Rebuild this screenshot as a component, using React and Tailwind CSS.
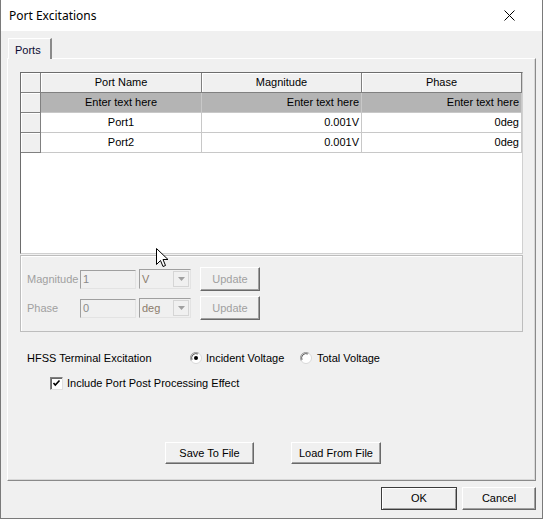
import React from "react";

const ui = "font-['Liberation_Sans',Arial,sans-serif] text-[11px] text-black";

// classic raised push button
function Btn({ w, h = 22, children, disabled, dflt }) {
  return (
    <div
      className={`flex items-center justify-center bg-[#f0f0f0] border ${
        dflt ? "border-[#3c3c3c]" : "border-t-white border-l-white border-r-[#696969] border-b-[#696969]"
      } ${disabled ? "text-[#a0a0a0]" : "text-black"}`}
      style={{ width: w, height: h }}
    >
      <div
        className={`w-full h-full flex items-center justify-center ${
          dflt
            ? "shadow-[inset_1px_1px_0_#fff,inset_-1px_-1px_0_#a0a0a0]"
            : "shadow-[inset_-1px_-1px_0_#a0a0a0]"
        }`}
      >
        {children}
      </div>
    </div>
  );
}

function Radio({ on }) {
  return (
    <svg width="12" height="12" viewBox="0 0 12 12" className="shrink-0">
      <circle cx="6" cy="6" r="5.5" fill="#fff" stroke="#d8d8d8" strokeWidth="1" />
      <path d="M1.1 8.6 A5.5 5.5 0 0 1 8.6 1.1" fill="none" stroke="#a0a0a0" strokeWidth="1" />
      <path d="M2 7.8 A4.4 4.4 0 0 1 7.8 2" fill="none" stroke="#5a5a5a" strokeWidth="1" />
      {on && <circle cx="6" cy="6" r="2" fill="#000" />}
    </svg>
  );
}

function Check() {
  return (
    <div className="w-[13px] h-[13px] bg-white border border-t-[#808080] border-l-[#808080] border-r-[#e0e0e0] border-b-[#e0e0e0] shadow-[inset_1px_1px_0_#696969] shrink-0">
      <svg width="11" height="11" viewBox="0 0 11 11">
        <path d="M2.5 5 L4.3 7 L8.5 2.5" fill="none" stroke="#000" strokeWidth="1.6" />
      </svg>
    </div>
  );
}

const cols = [161, 160, 160];

function HeadCell({ w, children }) {
  return (
    <div
      className="h-full flex items-center justify-center bg-[#f0f0f0] border-r border-b border-[#808080] shadow-[inset_1px_1px_0_#fff]"
      style={{ width: w }}
    >
      {children}
    </div>
  );
}

function DataRow({ cells, filter }) {
  return (
    <div className="flex h-[20px]">
      <HeadCell w={20} />
      {cells.map((c, i) => (
        <div
          key={i}
          className={`h-full flex items-center px-[2px] border-r border-b ${
            filter ? "bg-[#b4b4b4] border-[#c8c8c8]" : "bg-white border-[#c8c8c8]"
          } ${i === 0 ? "justify-center" : "justify-end"}`}
          style={{ width: cols[i] }}
        >
          {c}
        </div>
      ))}
    </div>
  );
}

function Field({ w, value }) {
  return (
    <div
      className="h-[19px] flex items-center px-[2px] bg-[#f0f0f0] border border-t-[#a0a0a0] border-l-[#a0a0a0] border-r-[#e3e3e3] border-b-[#e3e3e3] text-[#8a8a8a]"
      style={{ width: w }}
    >
      {value}
    </div>
  );
}

function Combo({ value }) {
  return (
    <div className="w-[52px] h-[20px] flex items-center justify-between bg-[#f0f0f0] border border-t-[#a0a0a0] border-l-[#a0a0a0] border-r-[#e3e3e3] border-b-[#e3e3e3] pl-[2px] pr-[1px] text-[#8c7c6c]">
      <span>{value}</span>
      <div className="w-[16px] h-[16px] flex items-center justify-center border border-[#d5d5d5] bg-[#f0f0f0]">
        <svg width="7" height="4" viewBox="0 0 7 4">
          <path d="M0 0 H7 L3.5 4 Z" fill="#a0a0a0" />
        </svg>
      </div>
    </div>
  );
}

export default function App() {
  return (
    <div className={`${ui} relative w-[543px] h-[519px] flex flex-col bg-[#f0f0f0] border-l border-r border-b border-[#7a7a7a]`}>
      {/* title bar */}
      <div className="h-[31px] bg-white flex items-center justify-between pl-[8px] pr-[27px]">
        <span className="font-['Noto_Sans',sans-serif] text-[12px]">Port Excitations</span>
        <svg width="11" height="11" viewBox="0 0 11 11">
          <path d="M0.5 0.5 L10.5 10.5 M10.5 0.5 L0.5 10.5" stroke="#000" strokeWidth="1" />
        </svg>
      </div>

      <div className="flex flex-col pl-[6px] pt-[7px]">
        {/* tab strip */}
        <div className="ml-[1px] w-[44px] h-[21px] -mb-[1px] relative z-10 bg-[#f0f0f0] border-t border-l border-t-white border-l-white border-r-2 border-r-[#8a8a8a] flex items-start pl-[6px] pt-[3px] text-[#0a0a30]">
          Ports
        </div>

        {/* tab page */}
        <div className="w-[529px] h-[423px] border border-t-white border-l-white border-r-[#8a8a8a] border-b-[#8a8a8a] shadow-[inset_-1px_-1px_0_#d8d8d8] flex flex-col pl-[12px] pt-[13px]">
          {/* grid */}
          <div className="w-[503px] h-[182px] bg-white border-l border-t border-[#6d6d6d] border-r border-r-[#d0d0d0] border-b border-b-[#d0d0d0] flex flex-col">
            <div className="flex h-[20px]">
              <HeadCell w={20} />
              <HeadCell w={cols[0]}>Port Name</HeadCell>
              <HeadCell w={cols[1]}>Magnitude</HeadCell>
              <HeadCell w={cols[2]}>Phase</HeadCell>
            </div>
            <DataRow filter cells={["Enter text here", "Enter text here", "Enter text here"]} />
            <DataRow cells={["Port1", "0.001V", "0deg"]} />
            <DataRow cells={["Port2", "0.001V", "0deg"]} />
          </div>

          {/* value editor group */}
          <div className="mt-[1px] w-[503px] h-[77px] border border-[#bdbdbd] shadow-[inset_1px_1px_0_#fff] flex flex-col pl-[6px] pt-[11px] gap-[5px] text-[#a0a0a0]">
            <div className="flex items-center h-[24px]">
              <span className="w-[53px]">Magnitude</span>
              <Field w={56} value="1" />
              <div className="ml-[3px]"><Combo value="V" /></div>
              <div className="ml-[9px]"><Btn w={60} h={24} disabled>Update</Btn></div>
            </div>
            <div className="flex items-center h-[24px]">
              <span className="w-[53px]">Phase</span>
              <Field w={56} value="0" />
              <div className="ml-[3px]"><Combo value="deg" /></div>
              <div className="ml-[9px]"><Btn w={60} h={24} disabled>Update</Btn></div>
            </div>
          </div>

          <div className="mt-[18px] h-[16px] flex items-center pl-[7px]">
            <span className="w-[163px]">HFSS Terminal Excitation</span>
            <Radio on />
            <span className="ml-[4px] w-[94px]">Incident Voltage</span>
            <Radio />
            <span className="ml-[5px]">Total Voltage</span>
          </div>

          <div className="mt-[10px] h-[14px] flex items-center pl-[30px]">
            <Check />
            <span className="ml-[4px]">Include Port Post Processing Effect</span>
          </div>

          <div className="mt-[52px] flex pl-[145px] gap-[37px]">
            <Btn w={89}>Save To File</Btn>
            <Btn w={90}>Load From File</Btn>
          </div>
        </div>

        {/* dialog buttons */}
        <div className="flex justify-end pr-[6px] pt-[6px] gap-[5px]">
          <Btn w={76} h={23} dflt>OK</Btn>
          <Btn w={74} h={23}>Cancel</Btn>
        </div>
      </div>

      {/* mouse pointer */}
      <svg className="absolute left-[155px] top-[248px]" width="13" height="20" viewBox="0 0 13 20">
        <path d="M0.5 0.5 V16.5 L4.5 12.5 L7 18.5 L9.5 17.5 L7 11.5 H12 Z" fill="#fff" stroke="#000" strokeWidth="1" strokeLinejoin="miter" />
      </svg>
    </div>
  );
}
